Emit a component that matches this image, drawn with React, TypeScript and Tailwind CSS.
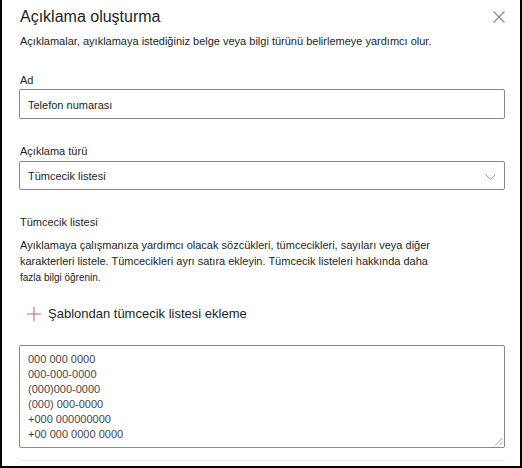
const phoneFormats = [
  '000 000 0000',
  '000-000-0000',
  '(000)000-0000',
  '(000) 000-0000',
  '+000 000000000',
  '+00 000 0000 0000',
]

function CloseIcon() {
  return (
    <svg width="12" height="12" viewBox="0 0 12 12" fill="none" stroke="#8a8886" strokeWidth="1.1">
      <path d="M0.5 0.5L11.5 11.5M11.5 0.5L0.5 11.5" />
    </svg>
  )
}

function Chevron() {
  return (
    <svg width="11" height="6" viewBox="0 0 11 6" fill="none" stroke="#a19f9d" strokeWidth="1">
      <path d="M0.5 0.5L5.5 5.5L10.5 0.5" />
    </svg>
  )
}

function PlusIcon() {
  return (
    <svg width="14" height="14" viewBox="0 0 14 14" fill="none" stroke="#cc6476" strokeWidth="1.1">
      <path d="M7 0V14M0 7H14" />
    </svg>
  )
}

export default function App() {
  return (
    <div
      className="h-[468px] w-[522px] overflow-hidden bg-white text-[#201f1e]"
      style={{ fontFamily: '"Liberation Sans", Arial, sans-serif' }}
    >
      <div className="relative h-[468px] border-x-2 border-b-2 border-black pl-[17px] pr-[15px]">
        <button className="absolute right-[15px] top-[11px] block">
          <CloseIcon />
        </button>

        <h1 className="ml-[1px] pt-[7px] text-[16px] leading-[20px]">Açıklama oluşturma</h1>
        <p className="ml-[1px] mt-[7px] text-[11px] leading-[15px]">
          Açıklamalar, ayıklamaya istediğiniz belge veya bilgi türünü belirlemeye yardımcı olur.
        </p>

        <label className="ml-[1px] mt-[24px] block text-[11px] leading-[15px]">Ad</label>
        <div className="mt-[1px] flex h-[30px] items-center rounded-[2px] border border-[#8a8886] px-[8px] pt-[2px] text-[11px] leading-[15px]">
          Telefon numarası
        </div>

        <label className="ml-[1px] mt-[25px] block text-[11px] leading-[15px]">Açıklama türü</label>
        <div className="mt-[2px] flex h-[29px] items-center justify-between rounded-[2px] border border-[#8a8886] pl-[8px] pr-[8px] pt-[2px] text-[11px] leading-[15px]">
          <span>Tümcecik listesi</span>
          <Chevron />
        </div>

        <div className="ml-[1px] mt-[25px] text-[11px] leading-[15px]">Tümcecik listesi</div>
        <p className="ml-[1px] mt-[7px] w-[420px] text-[11px] leading-[16px]">
          Ayıklamaya çalışmanıza yardımcı olacak sözcükleri, tümcecikleri, sayıları veya diğer
          karakterleri listele. Tümcecikleri ayrı satıra ekleyin. Tümcecik listeleri hakkında daha{' '}
          <span className="text-[10px]">fazla bilgi öğrenin.</span>
        </p>

        <button className="mt-[18px] flex h-[20px] items-center gap-[7px] pl-[8px] text-[13px] leading-[20px]">
          <PlusIcon />
          <span>Şablondan tümcecik listesi ekleme</span>
        </button>

        <div className="relative mt-[21px] h-[103px] rounded-[2px] border border-[#8a8886] px-[8px] pt-[6px] text-[11px] leading-[15px] text-[#484644]">
          {phoneFormats.map((l) => (
            <div key={l}>{l}</div>
          ))}
          <svg
            className="absolute bottom-[1px] right-[1px]"
            width="9"
            height="9"
            viewBox="0 0 9 9"
            fill="none"
            stroke="#a0a0a0"
            strokeWidth="1"
          >
            <path d="M8.5 1L1 8.5M8.5 5L5 8.5" />
          </svg>
        </div>

        <div className="mt-[12px] h-px bg-[#edebe9]" />
      </div>
    </div>
  )
}
